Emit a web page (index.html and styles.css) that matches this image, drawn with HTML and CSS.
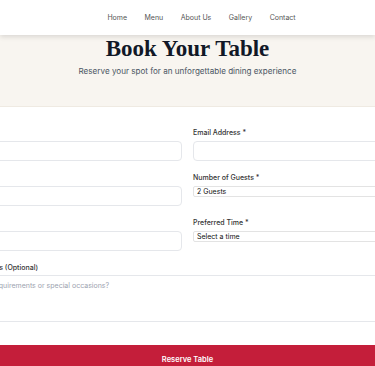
FILE: index.html
```html
<!DOCTYPE html>
<html lang="en">
<head>
  <meta charset="UTF-8" />
  <meta name="viewport" content="width=device-width, initial-scale=1.0"/>
  <title>Book Your Table</title>
  <link rel="stylesheet" href="styles.css">
</head>
<body>
  <nav class="nav">
    <a href="#">Home</a>
    <a href="#">Menu</a>
    <a href="#">About Us</a>
    <a href="#">Gallery</a>
    <a href="#">Contact</a>
  </nav>

  <header class="hero">
    <h1 class="title">Book Your Table</h1>
    <p class="subtitle">Reserve your spot for an unforgettable dining experience</p>
  </header>

  <section class="booking">
    <form class="form" id="bookingForm">
      <div class="field">
        <label for="name">Name *</label>
        <input type="text" id="name" required />
      </div>
      <div class="field">
        <label for="email">Email Address *</label>
        <input type="email" id="email" required />
      </div>
      <div class="field">
        <label for="phone">Phone *</label>
        <input type="tel" id="phone" required />
      </div>
      <div class="field">
        <label for="guests">Number of Guests *</label>
        <select id="guests">
          <option>2 Guests</option>
        </select>
      </div>
      <div class="field">
        <label for="date">Date *</label>
        <input type="text" id="date" required />
      </div>
      <div class="field">
        <label for="time">Preferred Time *</label>
        <select id="time">
          <option>Select a time</option>
        </select>
      </div>
      <div class="field wide">
        <label for="notes">Special Requests (Optional)</label>
        <textarea id="notes" placeholder="Any dietary requirements or special occasions?"></textarea>
      </div>
      <button type="submit" class="wide">Reserve Table</button>
    </form>
  </section>
</body>
</html>
```

FILE: styles.css
```css
body {
  font-family: Inter, 'Noto Sans', sans-serif;
  margin: 0;
  background: #ffffff;
  color: #1f2937;
  overflow: hidden;
}
.nav {
  position: relative;
  z-index: 2;
  height: 35px;
  display: flex;
  justify-content: center;
  align-items: center;
  gap: 17.5px;
  padding-left: 28px;
  background: #ffffff;
  box-shadow: 0 2px 5px rgba(0, 0, 0, 0.12);
}
.nav a {
  font-size: 7px;
  color: #555555;
  text-decoration: none;
}
.hero {
  background: #f8f5f0;
  border-bottom: 1px solid #efeae2;
  text-align: center;
  padding: 1px 0 29px;
}
.title {
  font-family: 'Liberation Serif', serif;
  font-size: 23px;
  font-weight: bold;
  line-height: 26px;
  color: #111827;
  margin: 0 0 3px;
}
.subtitle {
  font-size: 8.1px;
  line-height: 12px;
  color: #4b5563;
  margin: 0;
}
.booking {
  display: flex;
  justify-content: center;
  padding-top: 21px;
}
.form {
  flex: none;
  width: 484px;
  display: grid;
  grid-template-columns: 1fr 1fr;
  column-gap: 11px;
  row-gap: 12px;
  align-items: start;
}
.field {
  display: flex;
  flex-direction: column;
  align-items: stretch;
}
.wide {
  grid-column: 1 / -1;
}
label {
  font-size: 7px;
  line-height: 10px;
  font-weight: 500;
  color: #333333;
  margin-bottom: 3px;
}
input {
  box-sizing: border-box;
  height: 20px;
  border: 1px solid #e5e7eb;
  border-radius: 4px;
  padding: 0 6px;
  font: inherit;
  font-size: 7px;
}
select {
  box-sizing: border-box;
  height: 11px;
  border: 1px solid #e3e3e3;
  border-radius: 2px;
  padding: 0 3px;
  background: #ffffff;
  font-family: Inter, sans-serif;
  font-size: 7px;
  color: #111111;
  appearance: none;
}
textarea {
  box-sizing: border-box;
  height: 47px;
  border: 1px solid #e5e7eb;
  border-radius: 4px;
  padding: 5px 6px;
  font-family: Inter, sans-serif;
  font-size: 7px;
  resize: none;
}
textarea::placeholder {
  color: #9ca3af;
}
.field.wide label {
  margin-bottom: 2px;
}
button {
  margin-top: 11px;
  height: 28px;
  border: none;
  border-radius: 4px;
  background: #c41e3a;
  color: #ffffff;
  font-family: Inter, sans-serif;
  font-size: 7.5px;
  font-weight: 600;
}
```
